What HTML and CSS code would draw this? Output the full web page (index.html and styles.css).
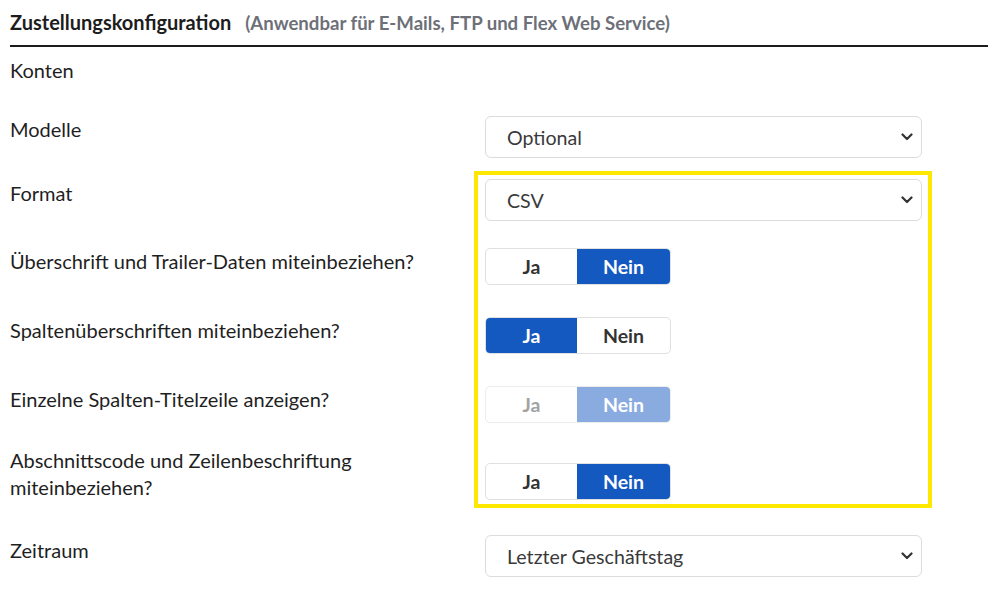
FILE: index.html
```html
<!DOCTYPE html>
<html lang="de">
<head>
<meta charset="utf-8">
<title>Zustellungskonfiguration</title>
<link rel="stylesheet" href="styles.css">
</head>
<body>
<div class="page">
  <h2 class="header">
    <span class="title">Zustellungskonfiguration</span>
    <span class="subtitle">(Anwendbar für E-Mails, FTP und Flex Web Service)</span>
  </h2>

  <div class="form">
    <div class="row row-konten">
      <div class="label">Konten</div>
    </div>

    <div class="row row-modelle">
      <div class="label">Modelle</div>
      <div class="control">
        <div class="select"><span>Optional</span><svg class="chev" width="12" height="8" viewBox="0 0 12 8"><path d="M1.5 1.5 L6 6 L10.5 1.5" fill="none" stroke="#333" stroke-width="2.2" stroke-linecap="round" stroke-linejoin="round"/></svg></div>
      </div>
    </div>

    <div class="highlight-group">
      <div class="row row-format">
        <div class="label">Format</div>
        <div class="control">
          <div class="select"><span>CSV</span><svg class="chev" width="12" height="8" viewBox="0 0 12 8"><path d="M1.5 1.5 L6 6 L10.5 1.5" fill="none" stroke="#333" stroke-width="2.2" stroke-linecap="round" stroke-linejoin="round"/></svg></div>
        </div>
      </div>

      <div class="row row-toggle first-toggle">
        <div class="label">Überschrift und Trailer-Daten miteinbeziehen?</div>
        <div class="control">
          <div class="toggle"><span class="opt">Ja</span><span class="opt on">Nein</span></div>
        </div>
      </div>

      <div class="row row-toggle">
        <div class="label">Spaltenüberschriften miteinbeziehen?</div>
        <div class="control">
          <div class="toggle"><span class="opt on">Ja</span><span class="opt">Nein</span></div>
        </div>
      </div>

      <div class="row row-toggle">
        <div class="label">Einzelne Spalten-Titelzeile anzeigen?</div>
        <div class="control">
          <div class="toggle disabled"><span class="opt">Ja</span><span class="opt on">Nein</span></div>
        </div>
      </div>

      <div class="row row-toggle row-two-line">
        <div class="label">Abschnittscode und Zeilenbeschriftung<br>miteinbeziehen?</div>
        <div class="control">
          <div class="toggle"><span class="opt">Ja</span><span class="opt on">Nein</span></div>
        </div>
      </div>
    </div>

    <div class="row row-zeitraum">
      <div class="label">Zeitraum</div>
      <div class="control">
        <div class="select"><span>Letzter Geschäftstag</span><svg class="chev" width="12" height="8" viewBox="0 0 12 8"><path d="M1.5 1.5 L6 6 L10.5 1.5" fill="none" stroke="#333" stroke-width="2.2" stroke-linecap="round" stroke-linejoin="round"/></svg></div>
      </div>
    </div>
  </div>
</div>
</body>
</html>
```

FILE: styles.css
```css
*, *::before, *::after { box-sizing: border-box; }

html, body {
  margin: 0;
  padding: 0;
  background: #fff;
}

body {
  font-family: Lato, "Open Sans", Arial, sans-serif;
  color: #222;
  font-size: 20px;
  line-height: 27px;
}

.page {
  padding-left: 10px;
}

.header {
  margin: 0;
  padding: 9px 0 8px 0;
  border-bottom: 2px solid #1c1c1c;
  font-size: 20px;
  line-height: 27px;
  font-weight: 700;
  display: flex;
  align-items: baseline;
  gap: 14px;
}

.title { color: #1d1d1d; }
.subtitle { color: #6d7078; font-size: 18.6px; }

.form {
  display: flex;
  flex-direction: column;
}

.row {
  display: flex;
  align-items: flex-start;
}

.label {
  width: 475px;
  flex: none;
  color: #1f1f1f;
}

.control {
  width: 437px;
  flex: none;
}

.row-konten { margin-top: 10px; }
.row-modelle { margin-top: 32px; }
.row-format { margin-top: 21px; }
.row-format .label { padding-top: 1px; }
.row-toggle { margin-top: 32px; }
.row-toggle.first-toggle { margin-top: 27px; }
.row-toggle.row-two-line { margin-top: 24px; }
.row-two-line .control { padding-top: 16px; }
.row-zeitraum { margin-top: 34px; }
.row-zeitraum .label { padding-top: 2px; }

.highlight-group {
  position: relative;
}

.highlight-group::after {
  content: "";
  position: absolute;
  left: 464px;
  width: 458px;
  top: 13px;
  bottom: -7px;
  border: 4px solid #ffe800;
  pointer-events: none;
}

.select {
  height: 42px;
  border: 1px solid #dcdcdc;
  border-radius: 6px;
  display: flex;
  align-items: center;
  justify-content: space-between;
  padding: 0 8px 0 21px;
  color: #3a3a3a;
  font-size: 19.6px;
  background: #fff;
}

.chev { display: block; }

.toggle {
  display: flex;
  width: 186px;
  height: 37px;
  border: 1px solid #e0e0e0;
  border-radius: 5px;
  overflow: hidden;
  font-weight: 700;
  font-size: 19.5px;
}

.opt {
  flex: 1;
  display: flex;
  align-items: center;
  justify-content: center;
  color: #333;
}

.opt:first-child { flex: 0 0 91px; }

.opt.on {
  background: #1459c0;
  color: #fff;
}

.toggle.disabled {
  border-color: #ececec;
}

.toggle.disabled .opt { color: #a3a3a3; }

.toggle.disabled .opt.on {
  background: #8aabdf;
  color: #fff;
}
```
